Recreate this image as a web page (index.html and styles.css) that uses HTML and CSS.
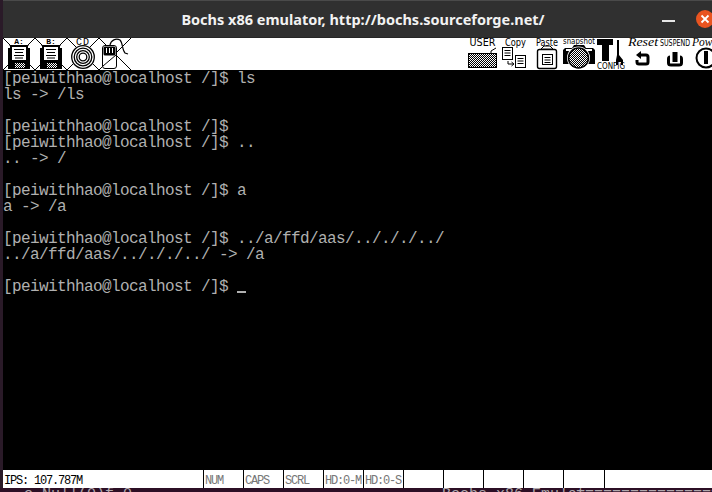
FILE: index.html
```html
<!DOCTYPE html>
<html lang="en">
<head>
<meta charset="utf-8">
<title>Bochs x86 emulator</title>
<link rel="stylesheet" href="styles.css">
</head>
<body>
<svg class="defs" width="0" height="0">
  <defs>
    <pattern id="dither" width="2" height="2" patternUnits="userSpaceOnUse">
      <rect width="2" height="2" fill="#fff"/>
      <rect width="1" height="1" fill="#000"/>
      <rect x="1" y="1" width="1" height="1" fill="#000"/>
    </pattern>
    <g id="x"><path d="M0 0L32 32M32 0L0 32" stroke="#000" fill="none"/></g>
    <g id="floppy">
      <path d="M7 7H25L27 9V31H5V9Z" fill="#000"/>
      <rect x="5" y="8" width="2" height="2" fill="#fff"/>
      <rect x="25" y="8" width="2" height="2" fill="#fff"/>
      <rect x="9" y="9" width="14" height="13" fill="#fff"/>
      <path d="M11 11.5H21M12 14.5H20M11 17.5H21M12 20H20" stroke="#000"/>
      <rect x="12" y="25" width="10" height="5" fill="url(#dither)"/>
    </g>
  </defs>
</svg>
<div class="window">
  <header class="titlebar">
    <span></span>
    <h1 class="title">Bochs x86 emulator, http://bochs.sourceforge.net/</h1>
    <div class="controls">
      <span class="minimize"></span>
      <span class="close">
        <svg width="18" height="18" viewBox="0 0 18 18"><path d="M5.5 5.5L12.5 12.5M12.5 5.5L5.5 12.5" stroke="#fff" stroke-width="1.8"/></svg>
      </span>
    </div>
  </header>

  <nav class="toolbar">
    <div class="tools">
      <svg class="tool" viewBox="0 0 32 32"><use href="#x"/><rect x="9" y="0" width="14" height="7" fill="#fff"/><text class="lbl" x="16" y="6" text-anchor="middle">A:</text><use href="#floppy"/></svg>
      <svg class="tool" viewBox="0 0 32 32"><use href="#x"/><rect x="9" y="0" width="14" height="7" fill="#fff"/><text class="lbl" x="16" y="6" text-anchor="middle">B:</text><use href="#floppy"/></svg>
      <svg class="tool" viewBox="0 0 32 32"><use href="#x"/><rect x="8" y="0" width="16" height="7" fill="#fff"/><text class="lbl wide" x="16" y="6.5" text-anchor="middle">CD</text>
        <circle cx="16" cy="19" r="12" fill="#fff"/>
        <g fill="none" stroke="#000" stroke-width="1.3"><circle cx="16" cy="19" r="11.3"/><circle cx="16" cy="19" r="8.8"/><circle cx="16" cy="19" r="6.3"/><circle cx="16" cy="19" r="3.8"/></g>
      </svg>
      <svg class="tool" viewBox="0 0 32 32"><use href="#x"/>
        <rect x="3.5" y="7.5" width="14" height="23" rx="2.5" fill="#fff" stroke="#000"/>
        <rect x="4.5" y="8.5" width="12" height="9" rx="1.5" fill="#000"/>
        <path d="M7.5 10V15M10.5 10V15M13.5 10V15" stroke="#fff"/>
        <path d="M4 28L17 17" stroke="#000"/>
        <path d="M11 7C12 2 17 0 21 2C24 5 23 12 26 15L29 16" stroke="#000" fill="none" stroke-width="1.2"/>
      </svg>
    </div>
    <div class="tools">
      <svg class="tool" viewBox="0 0 32 32"><text class="txt" x="15.5" y="8" text-anchor="middle" textLength="26" lengthAdjust="spacingAndGlyphs">USER</text>
        <path d="M24 15V13L29 10" stroke="#000" fill="none"/>
        <rect x="1.5" y="15.5" width="28" height="14" fill="url(#dither)" stroke="#000"/>
      </svg>
      <svg class="tool" viewBox="0 0 32 32"><text class="txt" x="16.5" y="8" text-anchor="middle" textLength="21" lengthAdjust="spacingAndGlyphs">Copy</text>
        <rect x="3.5" y="9.5" width="10" height="12" fill="#fff" stroke="#000"/>
        <path d="M5.5 12.5H11.5M5.5 15H11.5M5.5 17.5H11.5" stroke="#000"/>
        <path d="M9 23V26H14M12.5 24L15 26L12.5 28" stroke="#000" fill="none"/>
        <rect x="16.5" y="17.5" width="10" height="12" fill="#fff" stroke="#000"/>
        <path d="M18.5 20.5H24.5M18.5 23H24.5M18.5 25.5H24.5" stroke="#000"/>
      </svg>
      <svg class="tool" viewBox="0 0 32 32"><text class="txt" x="16" y="8" text-anchor="middle" textLength="22" lengthAdjust="spacingAndGlyphs">Paste</text>
        <rect x="6.5" y="11.5" width="19" height="19" rx="2" fill="#fff" stroke="#000" stroke-width="1.4"/>
        <path d="M10 11L13 8H19L22 11Z" fill="#fff" stroke="#000"/>
        <rect x="11.5" y="16.5" width="10" height="10" fill="#fff" stroke="#000"/>
        <path d="M13.5 19.5H19.5M13.5 22H19.5M13.5 24.500H19.5" stroke="#000"/>
      </svg>
      <svg class="tool" viewBox="0 0 32 32"><text class="txt snap" x="16" y="6" text-anchor="middle" textLength="32" lengthAdjust="spacingAndGlyphs">snapshot</text>
        <path d="M0 12L2 10H9L11 7H21L23 10H30L32 12V26H0Z" fill="#000"/>
        <rect x="3" y="11" width="6" height="2" fill="#fff"/>
        <rect x="23" y="11" width="6" height="2" fill="#fff"/>
        <circle cx="15.5" cy="20" r="11.5" fill="#fff"/>
        <circle cx="15.5" cy="20" r="10" fill="url(#dither)" stroke="#000" stroke-width="1.5"/>
      </svg>
      <svg class="tool" viewBox="0 0 32 32">
        <path d="M2 1H18V7H14V23H7V7H2Z" fill="#000"/>
        <path d="M22 1V2H24V17L28 22V27H26V24H23V27H21V22L22 17Z" fill="#000"/>
        <text class="cfg" x="16" y="31" text-anchor="middle" textLength="28" lengthAdjust="spacingAndGlyphs">CONFIG</text>
      </svg>
      <svg class="tool" viewBox="0 0 32 32"><text class="rst" x="16" y="8" text-anchor="middle" textLength="30" lengthAdjust="spacingAndGlyphs">Reset</text>
        <path d="M13 17H19Q21 17 21 19V24Q21 26 19 26H12Q10 26 10 24V22" fill="none" stroke="#000" stroke-width="3"/>
        <path d="M14 13V21L9 17Z" fill="#000"/>
      </svg>
      <svg class="tool" viewBox="0 0 32 32"><text class="cfg" x="16" y="8" text-anchor="middle" textLength="30" lengthAdjust="spacingAndGlyphs">SUSPEND</text>
        <path d="M11 19Q9.5 19 9.500 21V25Q9.500 27 12 27H20Q22.500 27 22.500 25V21Q22.500 19 21 19" fill="none" stroke="#000" stroke-width="3"/>
        <rect x="13.5" y="14" width="5" height="10" fill="#000"/>
      </svg>
      <svg class="tool" viewBox="0 0 32 32"><text class="rst" x="16" y="8" text-anchor="middle" textLength="30" lengthAdjust="spacingAndGlyphs">Power</text>
        <circle cx="15" cy="20" r="9.5" fill="none" stroke="#000" stroke-width="2"/>
        <rect x="13" y="13" width="4" height="13" fill="#000"/>
      </svg>
    </div>
  </nav>

  <main class="screen"><pre class="console">[peiwithhao@localhost /]$ ls
ls -&gt; /ls

[peiwithhao@localhost /]$
[peiwithhao@localhost /]$ ..
.. -&gt; /

[peiwithhao@localhost /]$ a
a -&gt; /a

[peiwithhao@localhost /]$ ../a/ffd/aas/../././../
../a/ffd/aas/../././../ -&gt; /a

[peiwithhao@localhost /]$ <span class="cursor"></span></pre></main>

  <footer class="status">
    <span class="cell ips">IPS: 107.787M</span>
    <span class="cell">NUM</span>
    <span class="cell">CAPS</span>
    <span class="cell">SCRL</span>
    <span class="cell">HD:0-M</span>
    <span class="cell">HD:0-S</span>
    <span class="cell"></span>
    <span class="cell"></span>
    <span class="cell"></span>
    <span class="cell"></span>
    <span class="cell last"></span>
    <span class="cell end"></span>
  </footer>
</div>
<div class="behind">
  <span class="behind-left">-o Null(0)f 0</span>
  <span class="behind-right">Bochs x86 Emulat</span>
  <span class="behind-rule">==================</span>
</div>
</body>
</html>
```
FILE: styles.css
```css
* { box-sizing: border-box; }
html, body { margin: 0; padding: 0; }
body {
  width: 712px;
  height: 492px;
  overflow: hidden;
  background: #2a1a28;
  font-family: "Liberation Mono", monospace;
}
.defs { display: block; height: 0; }
.window { width: 720px; margin-left: 3px; display: flex; flex-direction: column; }

.titlebar {
  height: 38px;
  display: grid;
  grid-template-columns: 1fr auto 1fr;
  align-items: center;
  background: #303030;
  border-top: 1px solid #4a4a4a;
  border-bottom: 1px solid #262626;
}
.title {
  margin: 0;
  font: 700 14.5px "Noto Sans", sans-serif;
  color: #f2f2f2;
  white-space: nowrap;
}
.controls { display: flex; justify-content: flex-end; align-items: center; gap: 21px; padding-right: 9px; }
.minimize { width: 13px; height: 2px; background: #e6e6e6; margin-top: 3px; }
.close {
  width: 18px; height: 18px; border-radius: 50%;
  background: #e95420;
  display: flex;
}

.toolbar {
  height: 32px;
  background: #fff;
  display: flex;
  justify-content: space-between;
  overflow: hidden;
}
.tools { display: flex; }
.tool { width: 32px; height: 32px; display: block; flex: none; overflow: hidden; }
.lbl { font: 700 8px "Liberation Mono", monospace; fill: #000; }
.lbl.wide { font-weight: 400; font-size: 10px; letter-spacing: 1px; }
.txt { font: 400 11px "DejaVu Sans", sans-serif; fill: #000; }
.txt.snap { font-size: 9px; }
.cfg { font: 400 8px "DejaVu Sans", sans-serif; fill: #000; }
.rst { font: italic 400 12px "Liberation Serif", serif; fill: #000; }

.screen { height: 400px; background: #000; overflow: hidden; }
.console {
  margin: 0;
  padding: 1px 0 0 0;
  font: 400 16px/16px "Liberation Mono", monospace;
  letter-spacing: -0.6px;
  color: #b0b0b0;
}
.cursor {
  display: inline-block;
  width: 9px;
  height: 2px;
  background: #b0b0b0;
  vertical-align: -2px;
}

.status {
  height: 18px;
  background: #fff;
  display: flex;
  font: 400 12px/18px "Liberation Mono", monospace;
  letter-spacing: -1.2px;
  color: #777;
}
.cell {
  width: 40px;
  flex: none;
  padding: 2px 0 0 1px;
  border-left: 1px solid #000;
  white-space: nowrap;
  overflow: hidden;
}
.ips { width: 200px; border-left: 0; color: #000; padding-left: 1px; }
.last { width: 41px; }
.end { width: 116px; }

.behind {
  height: 4px;
  background: #2c0f25;
  display: flex;
  overflow: hidden;
  font: 400 15px/14px "Liberation Mono", monospace;
  color: #b0a8ad;
  white-space: nowrap;
  padding-left: 15px;
}
.behind-left { width: 427px; flex: none; }
.behind-right { width: 134px; flex: none; }
.behind-rule { flex: none; }
```
